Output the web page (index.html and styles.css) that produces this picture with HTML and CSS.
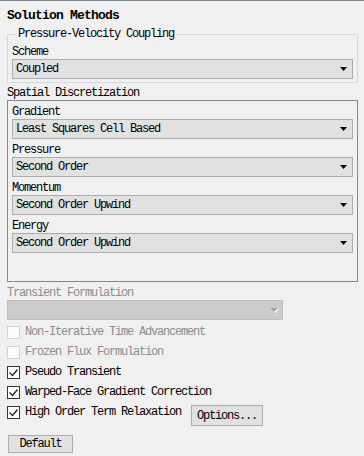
FILE: index.html
```html
<!DOCTYPE html>
<html>
<head lang="en">
    <meta charset="UTF-8">
    <title>Solution Methods</title>
    <link rel="stylesheet" href="styles.css">
</head>
<body>
<div id="panel">
    <h1 class="title">Solution Methods</h1>
    <fieldset class="group">
        <legend>Pressure-Velocity Coupling</legend>
        <div class="field-label">Scheme</div>
        <div class="select"><span>Coupled</span><svg class="arrow" width="7" height="4"><polygon points="0,0 7,0 3.5,4" fill="#000"/></svg></div>
    </fieldset>
    <div class="section-label">Spatial Discretization</div>
    <div class="box">
        <div class="field-label">Gradient</div>
        <div class="select"><span>Least Squares Cell Based</span><svg class="arrow" width="7" height="4"><polygon points="0,0 7,0 3.5,4" fill="#000"/></svg></div>
        <div class="field-label">Pressure</div>
        <div class="select"><span>Second Order</span><svg class="arrow" width="7" height="4"><polygon points="0,0 7,0 3.5,4" fill="#000"/></svg></div>
        <div class="field-label">Momentum</div>
        <div class="select"><span>Second Order Upwind</span><svg class="arrow" width="7" height="4"><polygon points="0,0 7,0 3.5,4" fill="#000"/></svg></div>
        <div class="field-label">Energy</div>
        <div class="select"><span>Second Order Upwind</span><svg class="arrow" width="7" height="4"><polygon points="0,0 7,0 3.5,4" fill="#000"/></svg></div>
    </div>
    <div class="field-label disabled">Transient Formulation</div>
    <div class="select select-disabled"><span></span><svg class="arrow" width="9" height="5"><polygon points="1,1 9,1 5,5" fill="#fff"/><polygon points="0,0 8,0 4,4" fill="#a3a3a3"/></svg></div>
    <ul class="checks">
        <li class="disabled"><span class="check"></span>Non-Iterative Time Advancement</li>
        <li class="disabled"><span class="check"></span>Frozen Flux Formulation</li>
        <li><span class="check on"><svg width="11" height="11"><polyline points="1.5,5.5 4.5,8.5 9.5,2.5" fill="none" stroke="#222" stroke-width="1.3"/></svg></span>Pseudo Transient</li>
        <li><span class="check on"><svg width="11" height="11"><polyline points="1.5,5.5 4.5,8.5 9.5,2.5" fill="none" stroke="#222" stroke-width="1.3"/></svg></span>Warped-Face Gradient Correction</li>
        <li><span class="check on"><svg width="11" height="11"><polyline points="1.5,5.5 4.5,8.5 9.5,2.5" fill="none" stroke="#222" stroke-width="1.3"/></svg></span>High Order Term Relaxation<button class="btn btn-options">Options...</button></li>
    </ul>
    <button class="btn btn-default">Default</button>
</div>
</body>
</html>
```
FILE: styles.css
```css
* {
    box-sizing: border-box;
}

body {
    margin: 0;
    background: #f0f0f0;
    color: #000;
    font-family: "Liberation Mono", "Courier New", Cousine, "Nimbus Mono PS", "Liberation Serif", monospace;
    font-size: 12px;
    letter-spacing: -1.2px;
}

#panel {
    border-top: 1px solid #80868d;
    padding: 8px 6px 0 7px;
}

.title {
    margin: 0 0 4px;
    font-size: 13px;
    font-weight: bold;
    line-height: 14px;
    letter-spacing: -0.8px;
}

.group {
    margin: 0;
    min-width: 0;
    border: 1px solid #d9d9d9;
    padding: 0 4px 3px;
}

.group legend {
    margin-left: 4px;
    padding: 0 2px;
    line-height: 14px;
}

.field-label {
    padding-top: 4px;
    line-height: 14px;
}

.section-label {
    padding-top: 3px;
    line-height: 14px;
}

.disabled {
    color: #8d8d8d;
}

.select {
    display: flex;
    align-items: center;
    justify-content: space-between;
    height: 20px;
    border: 1px solid #adadad;
    background: #e1e1e1;
    padding: 0 5px 0 3px;
    line-height: 18px;
}

.select .arrow {
    display: block;
}

.select-disabled {
    width: 276px;
    background: #cccccc;
    border-color: #bfbfbf;
    padding-right: 3px;
}

.box {
    border: 1px solid #85888f;
    padding: 0 4px 28px;
}

.checks {
    list-style: none;
    margin: 2px 0 0;
    padding: 0;
}

.checks li {
    display: flex;
    align-items: center;
    height: 20px;
    line-height: 14px;
}

.check {
    display: flex;
    align-items: center;
    justify-content: center;
    width: 13px;
    height: 13px;
    margin-right: 5px;
    border: 1px solid #d3d3d3;
    background: #fcfcfc;
}

.check.on {
    border-color: #333;
    background: #fff;
}

.check svg {
    display: block;
}

.btn {
    font-family: inherit;
    font-size: 12px;
    letter-spacing: -1.2px;
    color: #000;
    background: #e1e1e1;
    border: 1px solid #adadad;
    padding: 0;
    line-height: 14px;
}

.btn-options {
    align-self: flex-start;
    width: 72px;
    height: 21px;
    margin: 3px 0 0 10px;
}

.btn-default {
    display: block;
    width: 65px;
    height: 18px;
    margin: 13px 0 0 1px;
}
```
